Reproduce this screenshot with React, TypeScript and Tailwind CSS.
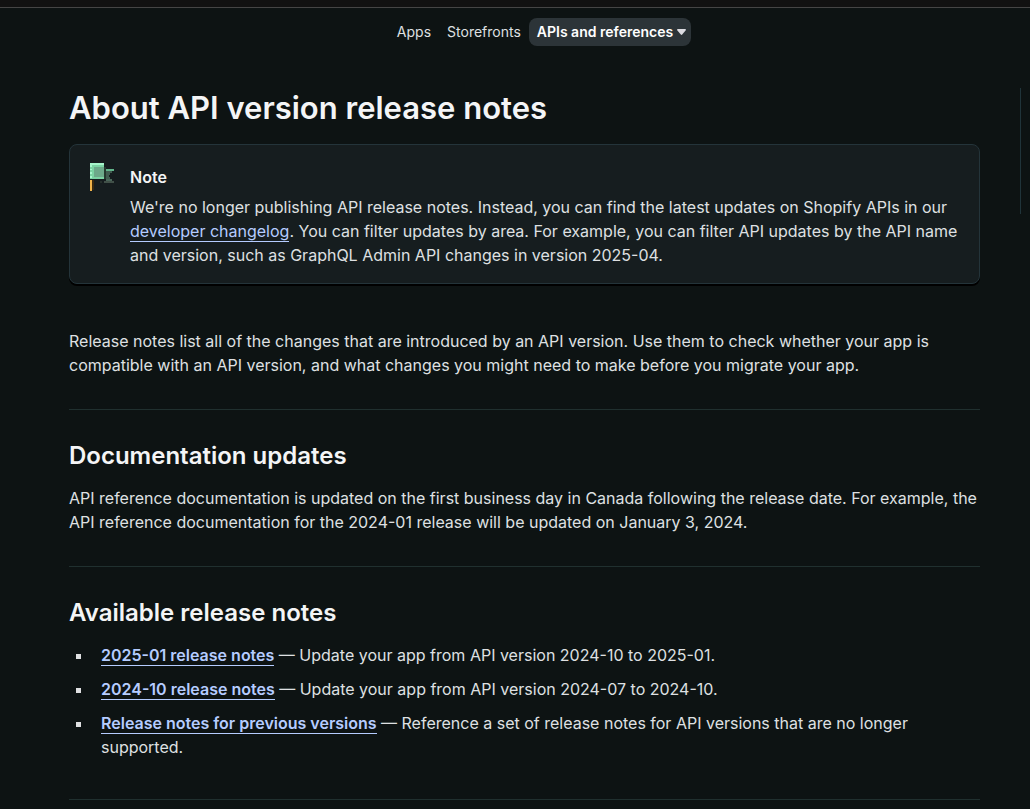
import type { ReactNode } from "react";

function PixelHammer() {
  return (
    <svg width="28" height="28" viewBox="0 0 28 28" shapeRendering="crispEdges" className="-mt-0.5 shrink-0" aria-hidden="true">
      <rect x="0" y="0" width="14" height="16" fill="#7bd3a3" />
      <rect x="0" y="0" width="14" height="2" fill="#a6f5cb" />
      <rect x="0" y="2" width="2" height="2" fill="#a6f5cb" />
      <rect x="0" y="6" width="2" height="1" fill="#a6f5cb" />
      <rect x="0" y="9" width="2" height="2" fill="#a6f5cb" />
      <rect x="0" y="13" width="2" height="2" fill="#a6f5cb" />
      <rect x="4" y="4" width="10" height="10" fill="#6da98a" />
      <rect x="14" y="4" width="2" height="12" fill="#26392f" />
      <rect x="16" y="6" width="8" height="2" fill="#62b58b" />
      <rect x="16" y="8" width="6" height="2" fill="#415c50" />
      <rect x="16" y="10" width="4" height="2" fill="#415c50" />
      <rect x="16" y="12" width="3" height="2" fill="#415c50" />
      <rect x="16" y="14" width="4" height="2" fill="#415c50" />
      <rect x="16" y="16" width="6" height="2" fill="#4a6659" />
      <rect x="14" y="18" width="10" height="2" fill="#415048" />
      <rect x="10" y="18" width="2" height="2" fill="#26302c" />
      <rect x="0" y="17" width="2" height="11" fill="#f0b34a" />
      <rect x="2" y="17" width="2" height="10" fill="#3b2a10" />
    </svg>
  );
}

function DocLink({ strong = false, children }: { strong?: boolean; children: ReactNode }) {
  return (
    <a href="#" className={strong ? "border-b border-[#b5ccff] font-semibold text-[#b5ccff]" : "border-b border-[#b5ccff] text-[#b5ccff]"}>
      {children}
    </a>
  );
}

function Bullet({ children }: { children: ReactNode }) {
  return (
    <li className="flex gap-5">
      <span className="mt-[11px] size-[5px] shrink-0 bg-[#dfe0e2]" aria-hidden="true" />
      <p>{children}</p>
    </li>
  );
}

export default function App() {
  return (
    <div className="min-h-screen bg-[#0d1313] font-['Inter',sans-serif] text-base text-[#dfe0e2]">
      <header>
        <div className="h-2 border-b border-[#454545] bg-[#111111]" />
        <nav className="flex justify-center pt-2.5 pl-[50px] text-sm">
          <a href="#" className="px-2 py-1">Apps</a>
          <a href="#" className="px-2 py-1">Storefronts</a>
          <button type="button" className="flex items-center gap-1 rounded-lg bg-[#2c3438] py-1 pr-[5px] pl-2 font-semibold text-white">
            APIs and references
            <svg width="9" height="6" viewBox="0 0 9 6" fill="#dcdce2" aria-hidden="true">
              <path d="M1 0h7q1 0 1 1L5.2 5.5q-.7.8-1.4 0L0 1q0-1 1-1Z" />
            </svg>
          </button>
        </nav>
      </header>

      <div className="flex items-start gap-10 pt-[42px] pb-2 pl-[69px]">
        <main className="min-w-0 flex-1">
          <h1 className="text-[31px] leading-10 font-semibold text-[#f4f5f6]">About API version release notes</h1>

          <section className="mt-4 flex gap-3 rounded-lg border border-[#24343a] bg-[#161d1f] pt-5 pr-5 pb-4 pl-5 shadow-[0_2px_0_#000000]">
            <PixelHammer />
            <div>
              <h2 className="leading-6 font-semibold text-[#f4f5f6]">Note</h2>
              <p className="mt-1.5 leading-6">
                We're no longer publishing API release notes. Instead, you can find the latest updates on Shopify APIs in our{" "}
                <DocLink>developer changelog</DocLink>. You can filter updates by area. For example, you can filter API updates by the API name and version, such as GraphQL Admin API changes in version 2025-04.
              </p>
            </div>
          </section>

          <p className="mt-[45px] leading-6">
            Release notes list all of the changes that are introduced by an API version. Use them to check whether your app is compatible with an API version, and what changes you might need to make before you migrate your app.
          </p>
          <hr className="mt-8 border-[#20302f]" />

          <h2 className="mt-[30px] text-2xl font-semibold text-[#f4f5f6]">Documentation updates</h2>
          <p className="mt-3.5 leading-6">
            API reference documentation is updated on the first business day in Canada following the release date. For example, the API reference documentation for the 2024-01 release will be updated on January 3, 2024.
          </p>
          <hr className="mt-8 border-[#20302f]" />

          <h2 className="mt-[30px] text-2xl font-semibold text-[#f4f5f6]">Available release notes</h2>
          <ul className="mt-3.5 space-y-2.5 pl-[7px] leading-6">
            <Bullet>
              <DocLink strong>2025-01 release notes</DocLink> — Update your app from API version 2024-10 to 2025-01.
            </Bullet>
            <Bullet>
              <DocLink strong>2024-10 release notes</DocLink> — Update your app from API version 2024-07 to 2024-10.
            </Bullet>
            <Bullet>
              <DocLink strong>Release notes for previous versions</DocLink> — Reference a set of release notes for API versions that are no longer supported.
            </Bullet>
          </ul>
          <hr className="mt-10 border-[#20302f]" />
        </main>
        <aside className="h-[126px] w-2.5 border-l border-[#20343a]" />
      </div>
    </div>
  );
}
